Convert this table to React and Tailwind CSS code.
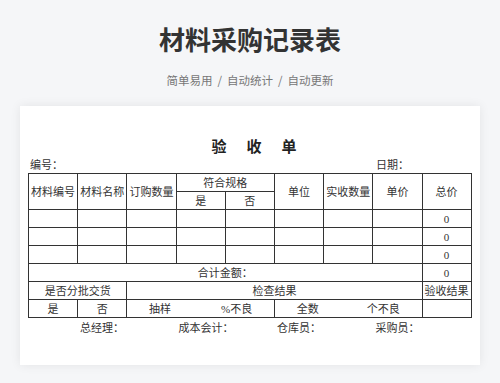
import React from "react";

const cell = "border border-[#333] p-0 text-center align-middle";

function Row({ last }) {
  return (
    <tr className="h-[18px]">
      {Array.from({ length: 8 }).map((_, i) => (
        <td key={i} className={cell}></td>
      ))}
      <td className={cell}>{last}</td>
    </tr>
  );
}

export default function App() {
  return (
    <div className="min-h-[383px] w-[500px] bg-[#f5f6f8] pt-[22px] font-['Noto_Sans_CJK_SC',sans-serif]">
      <h1 className="text-center text-[26px] font-bold leading-[34px] text-[#333]">
        材料采购记录表
      </h1>
      <p className="mt-[15px] text-center text-[11.5px] leading-[18px] text-[#777]">
        简单易用<span className="mx-[5px]">/</span>自动统计
        <span className="mx-[5px]">/</span>自动更新
      </p>

      <div className="mx-[20px] mt-[17px] h-[259px] bg-white pl-[8px] pt-[31px] shadow-[0_0_10px_rgba(0,0,0,0.08)] font-['Liberation_Serif','Noto_Sans_CJK_SC',serif] text-[11px] text-[#333]">
        <div className="h-[20px] text-center text-[15px] font-bold leading-[20px] text-[#222]">
          验<span className="inline-block w-[20px]"></span>收
          <span className="inline-block w-[20px]"></span>单
        </div>
        <div className="flex h-[16px] items-center">
          <span className="ml-[2px]">编号：</span>
          <span className="ml-[313px]">日期：</span>
        </div>

        <table className="w-[443px] table-fixed border-collapse border border-[#333] leading-[16px]">
          <colgroup>
            {Array.from({ length: 9 }).map((_, i) => (
              <col key={i} className="w-[49.2px]" />
            ))}
          </colgroup>
          <tbody>
            <tr className="h-[18px]">
              <td rowSpan={2} className={cell}>材料编号</td>
              <td rowSpan={2} className={cell}>材料名称</td>
              <td rowSpan={2} className={cell}>订购数量</td>
              <td colSpan={2} className={cell}>符合规格</td>
              <td rowSpan={2} className={cell}>单位</td>
              <td rowSpan={2} className={cell}>实收数量</td>
              <td rowSpan={2} className={cell}>单价</td>
              <td rowSpan={2} className={cell}>总价</td>
            </tr>
            <tr className="h-[18px]">
              <td className={cell}>是</td>
              <td className={cell}>否</td>
            </tr>
            <Row last="0" />
            <Row last="0" />
            <Row last="0" />
            <tr className="h-[18px]">
              <td colSpan={8} className={cell}>合计金额：</td>
              <td className={cell}>0</td>
            </tr>
            <tr className="h-[18px]">
              <td colSpan={2} className={cell}>是否分批交货</td>
              <td colSpan={6} className={cell}>检查结果</td>
              <td className={cell}>验收结果</td>
            </tr>
            <tr className="h-[18px]">
              <td className={cell}>是</td>
              <td className={cell}>否</td>
              <td colSpan={3} className={cell}>
                抽样<span className="inline-block w-[50px]"></span>%不良
              </td>
              <td colSpan={3} className={cell}>
                全数<span className="inline-block w-[48px]"></span>个不良
              </td>
              <td className={cell}></td>
            </tr>
          </tbody>
        </table>

        <div className="mt-[2px] flex h-[16px] items-center pl-[52px]">
          <span className="w-[98.5px]">总经理：</span>
          <span className="w-[98.5px]">成本会计：</span>
          <span className="w-[98.5px]">仓库员：</span>
          <span className="w-[98.5px]">采购员：</span>
        </div>
      </div>
    </div>
  );
}
